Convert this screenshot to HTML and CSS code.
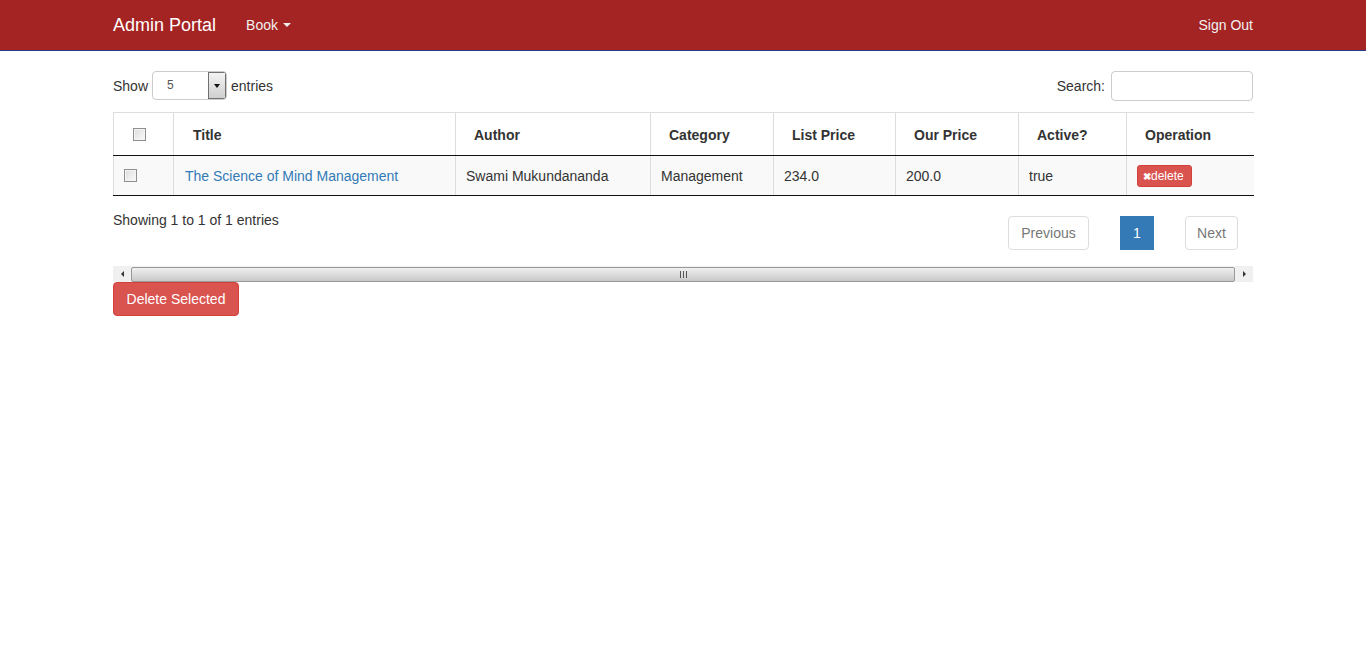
FILE: index.html
```html
<!DOCTYPE html>
<html>
<head>
<meta charset="utf-8">
<title>Admin Portal</title>
<link rel="stylesheet" href="styles.css">
</head>
<body>
<nav class="navbar">
  <div class="container nav-inner">
    <div class="nav-left">
      <a class="brand" href="#">Admin Portal</a>
      <a class="nav-link" href="#">Book <span class="caret"></span></a>
    </div>
    <a class="nav-link" href="#">Sign Out</a>
  </div>
</nav>
<main class="container">
  <div class="dt-top">
    <label class="length">Show
      <span class="select"><span class="select-val">5</span><span class="select-btn"><span class="tri"></span></span></span>
      entries</label>
    <label class="search">Search: <input type="text" class="search-input"></label>
  </div>
  <div class="scroll-area">
    <table class="tbl">
      <colgroup>
        <col style="width:60px"><col style="width:282px"><col style="width:195px"><col style="width:123px"><col style="width:122px"><col style="width:123px"><col style="width:108px"><col style="width:127px">
      </colgroup>
      <thead>
        <tr>
          <th class="cb-cell"><span class="cb"></span></th>
          <th class="title-th">Title</th>
          <th>Author</th>
          <th>Category</th>
          <th>List Price</th>
          <th>Our Price</th>
          <th>Active?</th>
          <th>Operation</th>
        </tr>
      </thead>
      <tbody>
        <tr>
          <td class="cb-cell body-cb"><span class="cb"></span></td>
          <td class="title-cell"><a href="#" class="title-link">The Science of Mind Management</a></td>
          <td>Swami Mukundananda</td>
          <td>Management</td>
          <td>234.0</td>
          <td>200.0</td>
          <td>true</td>
          <td><button class="btn-xs"><span class="x">&#10006;</span>delete</button></td>
        </tr>
      </tbody>
    </table>
    <div class="dt-bottom">
      <div class="info">Showing 1 to 1 of 1 entries</div>
      <ul class="pager">
        <li class="pg disabled prev">Previous</li>
        <li class="pg active">1</li>
        <li class="pg disabled next">Next</li>
      </ul>
    </div>
    <div class="hscroll">
      <span class="arrow left"></span>
      <div class="thumb"><span class="grip"></span></div>
      <span class="arrow right"></span>
    </div>
  </div>
  <button class="btn-danger">Delete Selected</button>
</main>
</body>
</html>
```

FILE: styles.css
```css
* { box-sizing: border-box; }
body {
  margin: 0;
  font-family: "Liberation Sans", Arial, sans-serif;
  font-size: 14px;
  line-height: 20px;
  color: #333;
  background: #fff;
}
.container {
  width: 1140px;
  margin: 0 auto;
}
.navbar {
  background: #a42323;
  height: 51px;
  border-bottom: 1px solid #263a8c;
}
.nav-inner {
  display: flex;
  justify-content: space-between;
  align-items: center;
  height: 50px;
}
.nav-left {
  display: flex;
  align-items: center;
  gap: 30px;
}
.brand {
  color: #fff;
  font-size: 18px;
  text-decoration: none;
}
.nav-link {
  color: #f1f1f1;
  text-decoration: none;
  font-size: 14px;
  display: flex;
  align-items: center;
}
.caret {
  display: inline-block;
  width: 0;
  height: 0;
  margin-left: 5px;
  border-top: 4px solid #eee;
  border-left: 4px solid transparent;
  border-right: 4px solid transparent;
}
.dt-top {
  display: flex;
  justify-content: space-between;
  align-items: center;
  margin-top: 19px;
  height: 31px;
}
.length, .search {
  display: flex;
  align-items: center;
}
.select {
  display: inline-flex;
  width: 75px;
  height: 29px;
  border: 1px solid #ccc;
  border-radius: 4px;
  margin: 0 4px;
  overflow: hidden;
}
.select-val {
  flex: 1;
  padding-left: 14px;
  font-size: 12px;
  line-height: 27px;
  color: #555;
}
.select-btn {
  width: 18px;
  background: linear-gradient(#f3f3f3, #cfcfcf);
  border: 1px solid #707070;
  display: flex;
  align-items: center;
  justify-content: center;
}
.tri {
  width: 0; height: 0;
  border-top: 4px solid #111;
  border-left: 3px solid transparent;
  border-right: 3px solid transparent;
}
.search-input {
  width: 142px;
  height: 30px;
  margin-left: 6px;
  border: 1px solid #ccc;
  border-radius: 4px;
}
.scroll-area {
  margin-top: 11px;
}
.tbl {
  width: 1140px;
  border-collapse: collapse;
  table-layout: fixed;
}
.tbl th, .tbl td {
  text-align: left;
  white-space: nowrap;
  border-left: 1px solid #ddd;
}
.tbl th {
  height: 43px;
  padding: 1px 18px 0 18px;
  font-weight: bold;
  border-top: 1px solid #ddd;
  border-bottom: 1px solid #111;
  vertical-align: middle;
}
.tbl th.title-th { padding-left: 19px; }
.tbl th.cb-cell { padding: 0 0 0 19px; }
.tbl td {
  height: 40px;
  padding: 0 10px;
  background: #f9f9f9;
  border-bottom: 1px solid #111;
  vertical-align: middle;
}
.tbl td.title-cell { padding-left: 11px; }
.tbl td.body-cb { padding-left: 10px; }
.cb {
  display: block;
  width: 13px;
  height: 13px;
  border: 1px solid #8e8f8f;
  background: linear-gradient(135deg, #dcdcdc, #fbfbfb);
  box-shadow: inset 0 0 0 1px #f4f4f4;
}
.title-link {
  color: #337ab7;
  text-decoration: none;
}
.btn-xs {
  background: #d9534f;
  border: 1px solid #d43f3a;
  color: #fff;
  font-family: inherit;
  font-size: 12px;
  line-height: 18px;
  padding: 1px 5px;
  border-radius: 3px;
  height: 22px;
  width: 55px;
  text-align: left;
}
.btn-xs .x { font-size: 10px; font-weight: bold; margin-right: 0; }
.dt-bottom {
  display: flex;
  justify-content: space-between;
  align-items: flex-start;
  padding-top: 14px;
  height: 70px;
}
.pager {
  list-style: none;
  margin: 6px 15px 0 0;
  padding: 0;
  display: flex;
  gap: 31px;
}
.pg {
  height: 34px;
  line-height: 20px;
  padding: 6px 0 7px;
  text-align: center;
  border: 1px solid #ddd;
  border-radius: 4px;
  color: #777;
  background: #fff;
}
.pg.prev { width: 81px; }
.pg.next { width: 53px; }
.pg.active {
  width: 34px;
  background: #337ab7;
  border-color: #337ab7;
  color: #fff;
  border-radius: 0;
}
.hscroll {
  display: flex;
  align-items: center;
  height: 16px;
  background: #f0f0f0;
}
.arrow {
  width: 18px;
  height: 16px;
  display: flex;
  align-items: center;
  justify-content: center;
}
.arrow::before {
  content: "";
  width: 0; height: 0;
  border-top: 3px solid transparent;
  border-bottom: 3px solid transparent;
}
.arrow.left::before { border-right: 3px solid #333; }
.arrow.right::before { border-left: 3px solid #333; }
.thumb {
  flex: 1;
  height: 15px;
  border: 1px solid #999;
  border-radius: 2px;
  background: linear-gradient(#f0f0f0, #c8c8c8);
  display: flex;
  align-items: center;
  justify-content: center;
}
.grip {
  width: 7px;
  height: 7px;
  background: repeating-linear-gradient(90deg, #555 0 1px, transparent 1px 3px);
}
.btn-danger {
  background: #d9534f;
  border: 1px solid #d43f3a;
  color: #fff;
  font-family: inherit;
  font-size: 14px;
  padding: 6px 0;
  width: 126px;
  border-radius: 4px;
  height: 34px;
  margin-top: 0;
}
```
